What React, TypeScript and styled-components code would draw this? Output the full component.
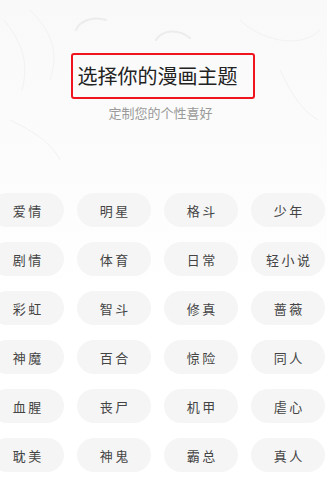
import React from 'react'
import styled, { createGlobalStyle } from 'styled-components'

const GlobalStyle = createGlobalStyle`
  html, body {
    margin: 0;
    padding: 0;
    background: #ffffff;
  }
  body {
    font-family: "Noto Sans CJK SC", "Noto Sans", sans-serif;
    overflow: hidden;
  }
`

const topics = [
    '爱情', '明星', '格斗', '少年',
    '剧情', '体育', '日常', '轻小说',
    '彩虹', '智斗', '修真', '蔷薇',
    '神魔', '百合', '惊险', '同人',
    '血腥', '丧尸', '机甲', '虐心',
    '耽美', '神鬼', '霸总', '真人',
]

const Page = styled.div`
  position: relative;
  width: 327px;
  height: 486px;
  overflow: hidden;
  background: linear-gradient(180deg, #f9f9f9 0%, #fcfcfc 35%, #ffffff 60%);
`

const Sketch = styled.svg`
  position: absolute;
  left: 0;
  top: 0;
  width: 327px;
  height: 180px;
  pointer-events: none;
`

const Header = styled.div`
  position: relative;
  display: flex;
  flex-direction: column;
  align-items: center;
  padding-top: 53px;
`

const TitleBox = styled.div`
  box-sizing: border-box;
  width: 184px;
  height: 46px;
  margin-left: -2px;
  border: 2px solid #f0141e;
  border-radius: 3px;
  display: flex;
  align-items: center;
  padding-left: 5px;
`

const Title = styled.h1`
  margin: 0;
  font-size: 20px;
  font-weight: 400;
  line-height: 24px;
  color: #222;
  letter-spacing: 0;
`

const Subtitle = styled.div`
  margin-top: 6px;
  margin-left: -6px;
  font-size: 13px;
  line-height: 16px;
  color: #9a9a9a;
`

const Grid = styled.div`
  position: relative;
  display: grid;
  grid-template-columns: repeat(4, 74px);
  column-gap: 13px;
  row-gap: 15px;
  margin: 72px 0 0 -10px;
`

const Pill = styled.div`
  height: 34px;
  border-radius: 17px;
  background: #f5f5f5;
  display: flex;
  align-items: center;
  justify-content: center;
  font-size: 13px;
  color: #444;
  letter-spacing: 2.5px;
  padding-left: 2.5px;
`

export default function App() {
    return (
        <Page>
            <GlobalStyle />
            <Sketch viewBox="0 0 327 180">
                <g fill="none" stroke="#ececec" strokeWidth="2" strokeLinecap="round">
                    <path d="M76 30 C80 20, 95 16, 106 20" />
                    <path d="M156 40 C162 30, 178 28, 190 38" />
                </g>
                <g fill="none" stroke="#f2f2f2" strokeWidth="1">
                    <path d="M4 20 C20 40, 30 60, 22 90" />
                    <path d="M30 10 C50 30, 60 50, 50 80" />
                    <path d="M240 20 C260 40, 300 50, 320 30" />
                    <path d="M280 70 C290 90, 300 110, 318 120" />
                    <path d="M10 120 C30 130, 50 140, 60 160" />
                </g>
            </Sketch>
            <Header>
                <TitleBox>
                    <Title>选择你的漫画主题</Title>
                </TitleBox>
                <Subtitle>定制您的个性喜好</Subtitle>
            </Header>
            <Grid>
                {topics.map((t) => (
                    <Pill key={t}>{t}</Pill>
                ))}
            </Grid>
        </Page>
    )
}
